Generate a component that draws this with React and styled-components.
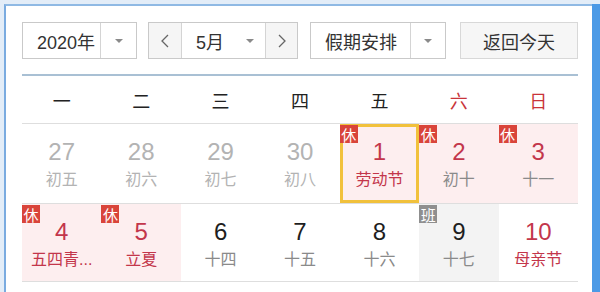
import React from "react";
import styled, { createGlobalStyle, css } from "styled-components";

const Global = createGlobalStyle`
  html, body { margin: 0; padding: 0; }
  body {
    background: #e3edf8;
    font-family: "Liberation Sans", "Noto Sans CJK SC", sans-serif;
  }
`;

const Page = styled.div`
  display: flex;
  height: 292px;
  width: 600px;
  padding: 4px 0 0 4px;
  box-sizing: border-box;
  overflow: hidden;
`;

const Panel = styled.div`
  flex: 1;
  background: #fff;
  border-top: 2px solid #8fb9e4;
  border-left: 2px solid #7aabe0;
  padding: 16px 14px 0 16px;
  display: flex;
  flex-direction: column;
`;

const SideBar = styled.div`
  width: 8px;
  background: #4c9ae6;
`;

const Toolbar = styled.div`
  display: flex;
  height: 37px;
  padding-bottom: 15px;
  border-bottom: 2px solid #a9c0d4;
`;

const Select = styled.div`
  display: flex;
  width: ${(p) => p.$w}px;
  margin-right: ${(p) => p.$mr || 0}px;
  border: 1px solid #c9c9c9;
  box-sizing: border-box;
  background: #fff;
`;

const SelectText = styled.div`
  flex: 1;
  display: flex;
  align-items: center;
  padding-left: ${(p) => p.$pl || 0}px;
  font-size: 18px;
  color: #333;
`;

const ArrowBox = styled.div`
  width: ${(p) => p.$w || 34}px;
  display: flex;
  align-items: center;
  justify-content: center;
  border-left: 1px solid #d4d4d4;
`;

const Tri = styled.span`
  width: 0;
  height: 0;
  border-left: 4px solid transparent;
  border-right: 4px solid transparent;
  border-top: 4px solid #8a8a8a;
`;

const NavBtn = styled.div`
  width: ${(p) => p.$w}px;
  display: flex;
  align-items: center;
  justify-content: center;
  background: #f5f5f5;
  ${(p) => (p.$side === "left" ? "border-right: 1px solid #d4d4d4;" : "border-left: 1px solid #d4d4d4;")}
`;

const MonthMid = styled.div`
  flex: 1;
  display: flex;
  align-items: center;
  padding-left: 14px;
  font-size: 18px;
  color: #333;
`;

const MonthLabel = styled.span`
  width: 50px;
`;

const TodayButton = styled.div`
  width: 118px;
  margin-left: auto;
  border: 1px solid #d8d8d8;
  box-sizing: border-box;
  background: #f6f6f6;
  display: flex;
  align-items: center;
  justify-content: center;
  font-size: 18px;
  color: #333;
`;

const WeekRow = styled.div`
  display: grid;
  grid-template-columns: repeat(7, 1fr);
  height: 47px;
  border-bottom: 1px solid #dedede;
`;

const WeekDay = styled.div`
  display: flex;
  align-items: center;
  justify-content: center;
  font-size: 18px;
  color: ${(p) => (p.$weekend ? "#c9343a" : "#222")};
`;

const DayRow = styled.div`
  display: grid;
  grid-template-columns: repeat(7, 1fr);
  height: ${(p) => p.$h}px;
  box-sizing: border-box;
  border-bottom: 1px solid #dedede;
`;

const Cell = styled.div`
  position: relative;
  display: flex;
  flex-direction: column;
  align-items: center;
  padding-top: 14px;
  box-sizing: border-box;
  background: ${(p) => (p.$kind === "off" ? "#fdeeef" : p.$kind === "work" ? "#f3f3f3" : "#fff")};
  ${(p) =>
    p.$today &&
    css`
      box-shadow: inset 0 0 0 3px #f1c13c;
    `}
`;

const Num = styled.div`
  font-size: 24px;
  line-height: 28px;
  color: ${(p) => p.$color};
`;

const Lunar = styled.div`
  font-size: 16px;
  line-height: 28px;
  color: ${(p) => p.$color};
  white-space: nowrap;
`;

const Badge = styled.span`
  position: absolute;
  top: 1px;
  left: 0;
  width: 18px;
  height: 18px;
  display: flex;
  align-items: center;
  justify-content: center;
  font-size: 15px;
  color: #fff;
  background: ${(p) => (p.$work ? "#8f8f8f" : "#d9443a")};
`;

const Chevron = ({ dir }) => (
  <svg width="8" height="14" viewBox="0 0 8 14">
    <polyline
      points={dir === "left" ? "7,1 1,7 7,13" : "1,1 7,7 1,13"}
      fill="none"
      stroke="#666"
      strokeWidth="1.3"
    />
  </svg>
);

const GREY = "#b3b3b3";
const BLACK = "#1e1e1e";
const LGREY = "#8a8a8a";
const RED = "#c3364b";

const rows = [
  {
    h: 80,
    cells: [
      { n: "27", l: "初五", nc: GREY, lc: GREY },
      { n: "28", l: "初六", nc: GREY, lc: GREY },
      { n: "29", l: "初七", nc: GREY, lc: GREY },
      { n: "30", l: "初八", nc: GREY, lc: GREY },
      { n: "1", l: "劳动节", nc: RED, lc: RED, kind: "off", today: true },
      { n: "2", l: "初十", nc: RED, lc: LGREY, kind: "off" },
      { n: "3", l: "十一", nc: RED, lc: LGREY, kind: "off" },
    ],
  },
  {
    h: 78,
    cells: [
      { n: "4", l: "五四青...", nc: RED, lc: RED, kind: "off" },
      { n: "5", l: "立夏", nc: RED, lc: RED, kind: "off" },
      { n: "6", l: "十四", nc: BLACK, lc: LGREY },
      { n: "7", l: "十五", nc: BLACK, lc: LGREY },
      { n: "8", l: "十六", nc: BLACK, lc: LGREY },
      { n: "9", l: "十七", nc: BLACK, lc: LGREY, kind: "work" },
      { n: "10", l: "母亲节", nc: RED, lc: RED },
    ],
  },
];

const weekdays = ["一", "二", "三", "四", "五", "六", "日"];

export default function App() {
  return (
    <>
      <Global />
      <Page>
        <Panel>
          <Toolbar>
            <Select $w={115} $mr={11}>
              <SelectText $pl={14}>2020年</SelectText>
              <ArrowBox $w={35}>
                <Tri />
              </ArrowBox>
            </Select>
            <Select $w={150} $mr={12}>
              <NavBtn $w={32} $side="left">
                <Chevron dir="left" />
              </NavBtn>
              <MonthMid>
                <MonthLabel>5月</MonthLabel>
                <Tri />
              </MonthMid>
              <NavBtn $w={31} $side="right">
                <Chevron dir="right" />
              </NavBtn>
            </Select>
            <Select $w={136}>
              <SelectText $pl={14}>假期安排</SelectText>
              <ArrowBox $w={34}>
                <Tri />
              </ArrowBox>
            </Select>
            <TodayButton>返回今天</TodayButton>
          </Toolbar>
          <WeekRow>
            {weekdays.map((d, i) => (
              <WeekDay key={d} $weekend={i >= 5}>
                {d}
              </WeekDay>
            ))}
          </WeekRow>
          {rows.map((r, ri) => (
            <DayRow key={ri} $h={r.h}>
              {r.cells.map((c) => (
                <Cell key={c.n} $kind={c.kind} $today={c.today}>
                  {c.kind === "off" && <Badge>休</Badge>}
                  {c.kind === "work" && <Badge $work>班</Badge>}
                  <Num $color={c.nc}>{c.n}</Num>
                  <Lunar $color={c.lc}>{c.l}</Lunar>
                </Cell>
              ))}
            </DayRow>
          ))}
        </Panel>
        <SideBar />
      </Page>
    </>
  );
}
